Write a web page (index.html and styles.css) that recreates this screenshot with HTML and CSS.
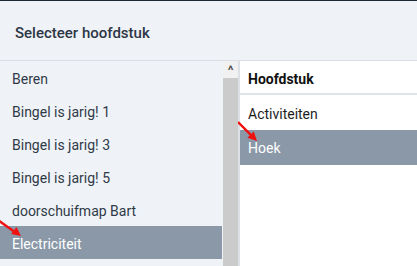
FILE: index.html
```html
<!DOCTYPE html>
<html>
  <head>
    <title>Selecteer hoofdstuk</title>
    <meta charset="utf-8">
    <link rel="stylesheet" href="styles.css">
  </head>
  <body>
    <header class="kop">
      <h1>Selecteer hoofdstuk</h1>
    </header>

    <main class="kiezer">
      <div class="mappen">
        <ul class="lijst">
          <li>Beren</li>
          <li>Bingel is jarig! 1</li>
          <li>Bingel is jarig! 3</li>
          <li>Bingel is jarig! 5</li>
          <li>doorschuifmap Bart</li>
          <li class="actief">Electriciteit
            <svg class="pijl pijl-links" width="24" height="20" viewBox="0 0 24 20">
              <line x1="0" y1="1" x2="16" y2="12.5" stroke="#f01010" stroke-width="2.4"/>
              <polygon points="23,17 13.1,15.1 18.5,7.9" fill="#f01010"/>
            </svg>
          </li>
        </ul>
        <div class="scrollbalk">
          <div class="knop">&#94;</div>
          <div class="duim"></div>
        </div>
      </div>

      <div class="hoofdstukken">
        <div class="titel">Hoofdstuk</div>
        <ul class="lijst">
          <li>Activiteiten</li>
          <li class="actief">Hoek
            <svg class="pijl pijl-rechts" width="22" height="22" viewBox="0 0 22 22">
              <line x1="0" y1="1" x2="13.3" y2="14.3" stroke="#f01010" stroke-width="2.4"/>
              <polygon points="19,20 9.4,16.8 15.8,10.4" fill="#f01010"/>
            </svg>
          </li>
        </ul>
      </div>
    </main>
  </body>
</html>
```

FILE: styles.css
```css
body {
  margin: 0;
  font-family: Roboto, "Liberation Sans", sans-serif;
  background-color: #eff2f6;
  border-top: 1px solid #1c2536;
  color: #2f3a48;
  overflow: hidden;
}
.kop {
  height: 59px;
  border-bottom: 1px solid #d9dee4;
  display: flex;
  align-items: center;
  padding-left: 15px;
}
.kop h1 {
  margin: 0;
  font-size: 15px;
  font-weight: 500;
  color: #2d3746;
  padding-top: 5px;
}
.kiezer {
  display: flex;
  height: 206px;
}
.mappen {
  width: 238px;
  display: flex;
  border-right: 2px solid #dde1e6;
}
.lijst {
  list-style: none;
  margin: 0;
  padding: 0;
}
.mappen .lijst {
  width: 222px;
  margin-right: 1px;
}
.lijst li {
  position: relative;
  height: 31px;
  padding-top: 2px;
  line-height: 33px;
  padding-left: 12px;
  font-size: 14px;
}
.lijst li.actief {
  background-color: #8a98a7;
  color: #fff;
}
.scrollbalk {
  width: 15px;
  display: flex;
  flex-direction: column;
  background-color: #f1f1f1;
}
.knop {
  height: 17px;
  text-align: center;
  font-size: 13px;
  line-height: 19px;
  color: #505050;
  font-weight: bold;
}
.duim {
  flex: 1;
  background-color: #cbcbcb;
}
.hoofdstukken {
  flex: 1;
  background-color: #fff;
}
.titel {
  height: 30px;
  padding-top: 2px;
  line-height: 32px;
  padding-left: 8px;
  font-size: 14px;
  font-weight: bold;
  color: #111;
  border-bottom: 2px solid #dfe4ea;
}
.hoofdstukken .lijst li {
  height: 35px;
  padding-top: 0;
  line-height: 37px;
  padding-left: 8px;
  color: #1e1e1e;
}
.hoofdstukken .lijst li:first-child {
  line-height: 39px;
}
.hoofdstukken .lijst li.actief {
  color: #fff;
}
.pijl {
  position: absolute;
}
.pijl-links {
  left: -2px;
  top: -7px;
}
.pijl-rechts {
  left: -2px;
  top: -9px;
}
```
